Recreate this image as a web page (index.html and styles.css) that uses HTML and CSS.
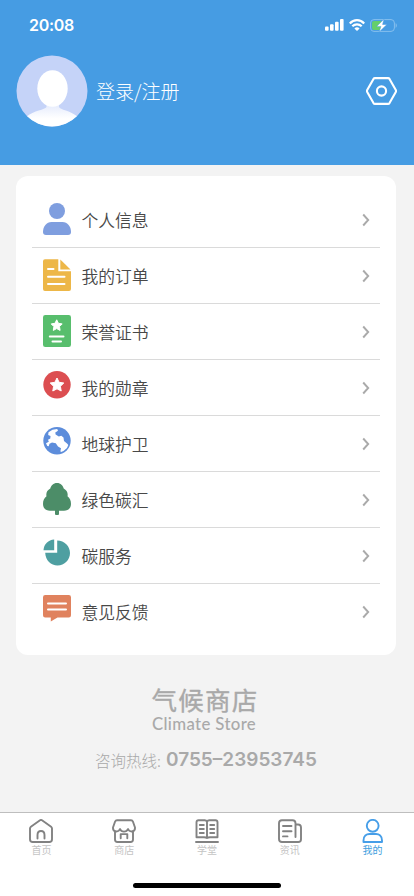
FILE: index.html
```html
<!DOCTYPE html>
<html lang="zh-CN">
<head>
<meta charset="utf-8">
<meta name="viewport" content="width=device-width, initial-scale=1">
<title>我的</title>
<link rel="stylesheet" href="styles.css">
</head>
<body>
<div class="app">
  <header class="header">
    <div class="status">
      <span class="time">20:08</span>
      <span class="signals">
        <svg width="19" height="12" viewBox="0 0 19 12" fill="#fff"><rect x="0" y="7.5" width="3.6" height="4.2" rx="1"/><rect x="5" y="5.3" width="3.6" height="6.4" rx="1"/><rect x="10" y="2.8" width="3.6" height="8.9" rx="1"/><rect x="15" y="0" width="3.6" height="11.7" rx="1"/></svg>
        <svg width="16" height="12" viewBox="0 0 16 12" fill="none" stroke="#fff" stroke-width="2.200"><path d="M.8 4.4C4.8.1 11.2.1 15.2 4.4"/><path d="M3.3 7.300c2.700-2.700 6.700-2.700 9.400 0"/><path d="M5.400 9.400c1.600-1.400 3.600-1.400 5.200 0L8 11.900z" fill="#fff" stroke="none"/></svg>
        <svg width="27" height="13" viewBox="0 0 27 13"><rect x=".6" y=".6" width="23.8" height="11.8" rx="3.4" fill="none" stroke="#86bfee" stroke-width="1"/><path d="M25.6 4.3c1.6.5 1.6 3.9 0 4.4z" fill="#86bfee"/><path d="M4 2h7v9H4a2 2 0 0 1-2-2V4a2 2 0 0 1 2-2z" fill="#65cf6b"/><path d="M14 .1 6.700 7.400h4.200l-1.700 5.500 7.700-7.400h-4.300z" fill="#fff" stroke="#469ce3" stroke-width=".5"/></svg>
      </span>
    </div>
    <div class="profile">
      <svg class="avatar" width="72" height="72" viewBox="0 0 72 72"><defs><clipPath id="c"><circle cx="36" cy="36" r="35.5"/></clipPath><linearGradient id="g" x1="0" y1="0" x2="0" y2="1"><stop offset="0" stop-color="#e2e9fc"/><stop offset=".65" stop-color="#fff"/></linearGradient></defs><g clip-path="url(#c)"><path d="M0 0h72v72H0z" fill="#c5d3f8"/><path d="M30.500 48h12.500v4c1 3 11 3 19 10v10H10V62c8-7 19-7 20.500-10z" fill="url(#g)"/><ellipse cx="36.500" cy="33.500" rx="15.200" ry="18.300" fill="#fff"/></g></svg>
      <span class="login">登录/注册</span>
      <svg class="settings" width="31" height="28" viewBox="0.500 0 31 28" fill="none" stroke="#fff" stroke-width="2.100" stroke-linejoin="round"><path d="M9.400 1.100h13.200q.9 0 1.400.8l6.300 11.200q.5.900 0 1.800L24 26.100q-.5.800-1.400.8H9.400q-.9 0-1.400-.8L1.700 14.900q-.5-.9 0-1.800L8 1.900q.5-.8 1.400-.8z"/><circle cx="16" cy="14" r="4.600"/></svg>
    </div>
  </header>

  <main class="card">
    <div class="row">
      <svg class="icon" viewBox="0 0 28 32" fill="#7f9edf"><circle cx="14" cy="8" r="8"/><path d="M8.500 19h11c5 0 8.500 4.500 8.500 10 0 2-1 3-3 3H3c-2 0-3-1-3-3 0-5.500 3.500-10 8.500-10z"/></svg>
      <span class="label">个人信息</span><svg class="arrow" viewBox="0 0 8 14"><path d="m1.200 1.500 5 5.500-5 5.500"/></svg>
    </div>
    <div class="row">
      <svg class="icon" viewBox="0 0 28 32"><path d="M2 .200h13.300v12H28V30q0 2-2 2H2q-2 0-2-2V2.200q0-2 2-2z" fill="#edb748"/><path d="M17.300.400 27.500 10.600H17.300z" fill="#edb748"/><path d="M5 10h5.500M5 17.700h16.500M5 25h16.500" stroke="#fff" stroke-width="2" stroke-linecap="round"/></svg>
      <span class="label">我的订单</span><svg class="arrow" viewBox="0 0 8 14"><path d="m1.200 1.500 5 5.500-5 5.500"/></svg>
    </div>
    <div class="row">
      <svg class="icon" viewBox="0 0 28 32"><rect width="28" height="32" rx="2.300" fill="#58be6d"/><path d="m13.700 4.800 1.700 3.500 3.800.6-2.700 2.700.6 3.800-3.400-1.800-3.400 1.800.6-3.800-2.700-2.700 3.800-.6z" fill="#fff" stroke="#fff" stroke-linejoin="round"/><path d="M6.800 21.500h13.700M9.500 26.600h8.500" stroke="#fff" stroke-width="2" stroke-linecap="round"/></svg>
      <span class="label">荣誉证书</span><svg class="arrow" viewBox="0 0 8 14"><path d="m1.200 1.500 5 5.500-5 5.500"/></svg>
    </div>
    <div class="row">
      <svg class="icon" viewBox="0 0 28 32"><circle cx="14" cy="13.700" r="13.700" fill="#dc4e51"/><path d="m14 7 2.100 4.300 4.700.7-3.400 3.300.8 4.700-4.200-2.200L9.800 20l.8-4.700L7.200 12l4.700-.7z" fill="#fff" stroke="#fff" stroke-linejoin="round"/></svg>
      <span class="label">我的勋章</span><svg class="arrow" viewBox="0 0 8 14"><path d="m1.200 1.500 5 5.500-5 5.500"/></svg>
    </div>
    <div class="row">
      <svg class="icon" viewBox="0 0 28 32"><circle cx="14" cy="13.700" r="13.700" fill="#5d8ddb"/><path d="M5.500 5.200 9.500 2.800l4.700-.8.8 1.700-2.700 1.700.3 2 3.200 2 2.500-.6 2.200 1.800.5 3.500 3.300 2.700 1 1.200-1.300 3-3.500 3-2.500 1-.6-.8.600-3-3-1.700-2.200-3.200-3.800-.8-2.500 1.300-.8 2.500-1.400-.3-1.300-2.800 2.800-1.400-.8-2 2.300-1.200.2-2.500-2.300-1.200z" fill="#fff"/></svg>
      <span class="label">地球护卫</span><svg class="arrow" viewBox="0 0 8 14"><path d="m1.200 1.500 5 5.500-5 5.500"/></svg>
    </div>
    <div class="row">
      <svg class="icon" viewBox="0 0 28 32" fill="#4c8d68"><path d="M14 0c3.700 0 6 2.600 6.700 5.600 3 1.600 4.600 4.500 3.800 7.700 2.300 1.600 3.500 4.400 3.500 7.700 0 4.300-3 6.800-7 6.800h-5V31q0 1-1 1h-2q-1 0-1-1v-3.200H7c-4 0-7-2.500-7-6.800 0-3.300 1.200-6.100 3.500-7.700-.8-3.200.8-6.100 3.800-7.700C8 2.600 10.300 0 14 0z"/></svg>
      <span class="label">绿色碳汇</span><svg class="arrow" viewBox="0 0 8 14"><path d="m1.200 1.500 5 5.500-5 5.500"/></svg>
    </div>
    <div class="row">
      <svg class="icon" viewBox="0 0 28 32" fill="#4e9fa1"><path d="M11.200.500v10.700H.500C.800 5.300 5.300.800 11.200.500z"/><path d="M14.200 1.600c7.300.2 12.800 5.600 12.800 12.500S21.500 26.500 14.500 26.500C8 26.500 2.500 21.500 2.200 13.800h12z"/></svg>
      <span class="label">碳服务</span><svg class="arrow" viewBox="0 0 8 14"><path d="m1.200 1.500 5 5.500-5 5.500"/></svg>
    </div>
    <div class="row">
      <svg class="icon" viewBox="0 0 28 32"><path d="M2.200 0h23.600Q28 0 28 2.200v18q0 2.200-2.200 2.200H14.500L7.800 26.600v-4.200H2.200Q0 22.400 0 20.200v-18Q0 0 2.200 0z" fill="#e0825e"/><path d="M5 8.600h18M5 14.600h18" stroke="#fff" stroke-width="2" stroke-linecap="round"/></svg>
      <span class="label">意见反馈</span><svg class="arrow" viewBox="0 0 8 14"><path d="m1.200 1.500 5 5.500-5 5.500"/></svg>
    </div>
  </main>

  <section class="brand">
    <div class="brand-cn">气候商店</div>
    <div class="brand-en">Climate Store</div>
    <div class="hotline"><span>咨询热线:</span><b>0755–23953745</b></div>
  </section>

  <nav class="tabs">
    <div class="tab"><svg viewBox="0 0 24 24"><path d="M11 1.300 1.900 7.700Q1 8.400 1 9.500v10.700Q1 23 3.800 23h16.400q2.800 0 2.800-2.800V9.500q0-1.100-.9-1.800L13 1.300q-1-.7-2 0zM8.500 19.500V16q0-4 3.500-4t3.500 4v3.500"/></svg><span>首页</span></div>
    <div class="tab"><svg viewBox="0 0 24 24"><path d="M5 1.200h14q1.400 0 1.900 1.300L23 8.500c.3 5-5.500 5-7 1.500-1.500 3.500-6.500 3.500-8 0C6.500 13.500.7 13.500 1 8.500l2.100-6Q3.600 1.200 5 1.200zM3 12v8.500Q3 23 5.500 23h13q2.500 0 2.500-2.500V12M8.700 19.300v-4.200h6.600v4.200"/></svg><span>商店</span></div>
    <div class="tab"><svg viewBox="0 0 24 24"><path d="M12 2.700Q11.300 1.200 9.700 1.200H3.500q-2 0-2 2v15H9q2 0 3 .8 1-.8 3-.8h7.500v-15q0-2-2-2h-6.200q-1.600 0-2.300 1.500zM12 3v16M4.800 6h4M4.800 10h4M4.800 14h4M15.200 6h4M15.200 10h4M15.200 14h4M1 23h22"/></svg><span>学堂</span></div>
    <div class="tab"><svg viewBox="0 0 24 24"><path d="M4 1.200h10.500q3 0 3 3V5.500H20q3 0 3 3v11.700q0 2.800-2.800 2.800H4q-3 0-3-3V4.200q0-3 3-3zM17.500 5.500V18M5 7h8.500M5 12.200h8.500M5 17.400h4.500"/></svg><span>资讯</span></div>
    <div class="tab active"><svg viewBox="0 0 24 24"><circle cx="11.700" cy="6.800" r="5.900"/><path d="M2.500 23v-1.500c0-4.500 3-6.500 6-6.500h6.500c3 0 6 2 6 6.500V23z"/></svg><span>我的</span></div>
    <div class="home-bar"></div>
  </nav>
</div>
</body>
</html>
```
FILE: styles.css
```css
* { box-sizing: border-box; }
body { margin: 0; background: #f3f3f3; font-family: "Noto Sans CJK SC", sans-serif; }
svg { display: block; flex: none; }
.app { width: 414px; height: 896px; display: flex; flex-direction: column; overflow: hidden; }
.header { height: 165px; flex: none; background: #469ce3; color: #fff; }
.status { height: 50px; padding: 0 17px 0 29px; display: flex; justify-content: space-between; align-items: center; }
.time { font: 600 16px/20px Inter, sans-serif; letter-spacing: -.3px; }
.signals { display: flex; align-items: center; gap: 5px; }
.profile { display: flex; align-items: center; padding: 5px 17.500px 0 16px; height: 77px; }
.login { margin-left: 8px; font-size: 19px; font-weight: 300; line-height: 28px; }
.settings { margin: 0 0 0 auto; }
.card { flex: none; width: 380px; height: 479px; margin: 11px 0 0 16px; padding: 16px; background: #fff; border-radius: 12px; }
.row { height: 56px; display: flex; align-items: flex-start; padding: 11px 10px 0 11px; border-bottom: 1px solid #dadada; }
.row:last-child { border-bottom: 0; }
.icon { width: 28px; height: 32px; }
.label { margin: 4px 0 0 10.500px; font-size: 16.800px; line-height: 26px; font-weight: 350; color: #484848; }
.arrow { width: 8px; height: 14px; margin: 10px 0 0 auto; fill: none; stroke: #aaa; stroke-width: 1.9; }
.brand { flex: 1; display: flex; flex-direction: column; align-items: center; color: #a9a9a9; padding-top: 32px; }
.brand-cn { font-size: 25.500px; line-height: 24px; font-weight: 400; letter-spacing: 1.300px; margin-right: 4px; -webkit-text-stroke: .35px #a9a9a9; }
.brand-en { font: 500 16.800px/20px Lato, sans-serif; letter-spacing: .35px; margin: 3px 6px 0 0; }
.hotline { display: flex; align-items: center; margin: 13px 2px 0 0; line-height: 26px; font-size: 15.500px; font-weight: 300; gap: 5px; }
.hotline b { font: 600 19px/24px Inter, sans-serif; }
.tabs { height: 84px; flex: none; display: flex; flex-wrap: wrap; align-content: flex-start; background: #fff; border-top: 1px solid #bebebe; }
.tab { width: 20%; height: 70px; padding-top: 6px; display: flex; flex-direction: column; align-items: center; color: #c4c4c4; font-size: 10px; line-height: 14px; }
.tab svg { width: 24px; height: 24px; fill: none; stroke: #828282; stroke-width: 1.9; stroke-linejoin: round; stroke-linecap: round; }
.tab.active { color: #3d9ede; }
.tab.active svg { stroke: #469ee8; }
.home-bar { width: 148px; height: 5px; margin: 0 auto; border-radius: 3px; background: #000; }
```
